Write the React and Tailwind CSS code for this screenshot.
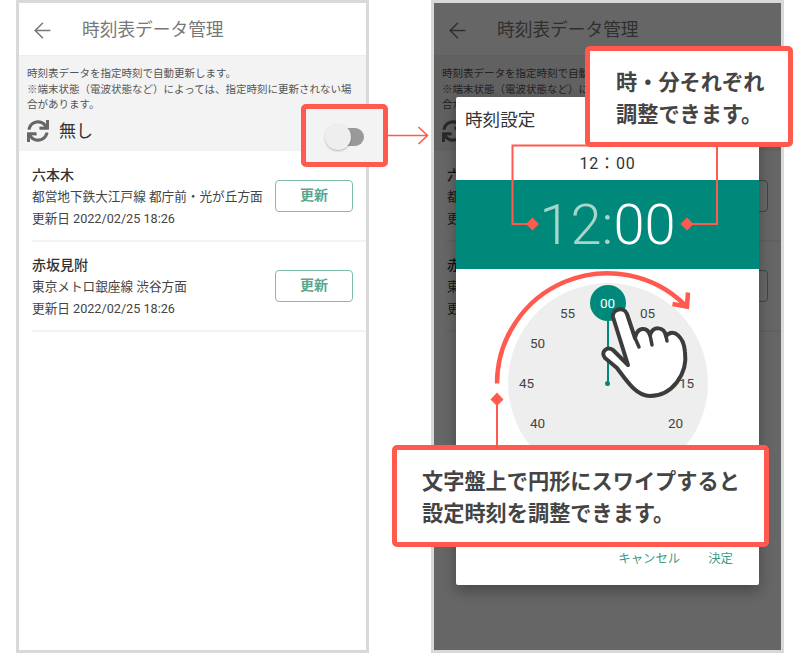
import React from 'react';
import { ArrowLeft } from 'lucide-react';
import { FaSync } from 'react-icons/fa';

const stations = [
  { name: '六本木', line: '都営地下鉄大江戸線 都庁前・光が丘方面' },
  { name: '赤坂見附', line: '東京メトロ銀座線 渋谷方面' },
];

const dialNumbers = [
  { label: '55', x: 60, y: 30 },
  { label: '05', x: 140, y: 30 },
  { label: '50', x: 30, y: 60 },
  { label: '10', x: 170, y: 60 },
  { label: '45', x: 19, y: 100 },
  { label: '15', x: 179, y: 100 },
  { label: '40', x: 30, y: 140 },
  { label: '20', x: 168, y: 140 },
];

function TimetableScreen() {
  return (
    <>
      {/* Header */}
      <div className="flex h-[53px] items-center border-b border-[#eeeeee] pl-[10.5px] pt-[3px]">
        <ArrowLeft size={25} strokeWidth={1.5} className="text-[#777777]" />
        <span className="ml-[27.5px] text-[17.7px] text-[#777777]">時刻表データ管理</span>
      </div>

      {/* Auto update */}
      <div className="h-[95px] bg-[#f3f3f3] pl-2 pr-3 pt-[10px]">
        <p className="text-[10.5px] leading-[15.5px] text-[#555555]">
          時刻表データを指定時刻で自動更新します。
          <br />
          ※端末状態（電波状態など）によっては、指定時刻に更新されない場合があります。
        </p>
        <div className="mt-[6px] flex items-center gap-[10px]">
          <FaSync size={22} className="text-[#666666]" />
          <span className="text-[17px] text-[#333333]">無し</span>
        </div>
      </div>

      {/* Stations */}
      <div className="pt-[1px]">
        {stations.map((s) => (
          <div key={s.name} className="ml-[13px] flex h-[90px] items-center justify-between border-b-2 border-[#f3f3f3] pr-[13px]">
            <div className="flex flex-col gap-[4px] pt-[2px]">
              <span className="text-[14px] leading-[18px] font-medium text-[#333333]">{s.name}</span>
              <span className="text-[12.65px] leading-[18px] text-[#444444]">{s.line}</span>
              <span className="text-[12.65px] leading-[18px] text-[#444444]">更新日 2022/02/25 18:26</span>
            </div>
            <button className="mb-[1px] h-[32px] w-[78px] rounded-[4px] border-[1.5px] border-[#7fbfa8] text-[14px] font-bold text-[#5aa68e]">
              更新
            </button>
          </div>
        ))}
      </div>
    </>
  );
}

function TimeDialog() {
  return (
    <div className="absolute left-[22px] top-[94px] flex h-[488px] w-[303px] flex-col rounded-[2px] bg-white shadow-[0_6px_14px_rgba(0,0,0,0.3)]">
      <div className="pl-[9px] pt-[10px] text-[17.6px] leading-[26px] text-[#333333]">時刻設定</div>
      <div className="mt-[21px] text-center text-[16px] leading-[20px] tracking-[0.8px] text-[#333333]">12：00</div>
      <div className="mt-[6px] flex h-[89px] items-center justify-center bg-[#00897b] text-[56px] font-light leading-none">
        <span className="text-[#a8d5ca]">12:</span>
        <span className="text-white">00</span>
      </div>

      {/* Dial */}
      <div className="relative mx-auto mt-[14px] size-[200px] rounded-full bg-[#eeeeee]">
        <div className="absolute left-[99px] top-[38px] h-[62px] w-[2px] bg-[#00897b]" />
        <div className="absolute left-[97.5px] top-[97.5px] size-[5px] rounded-full bg-[#00897b]" />
        <div className="absolute left-[82px] top-[2px] flex size-[36px] items-center justify-center rounded-full bg-[#00897b] text-[13.5px] text-white">
          00
        </div>
        {dialNumbers.map((n) => (
          <span
            key={n.label}
            className="absolute -translate-x-1/2 -translate-y-1/2 text-[13.5px] text-[#444444]"
            style={{ left: n.x, top: n.y }}
          >
            {n.label}
          </span>
        ))}
      </div>

      <div className="mt-auto flex justify-end gap-[28px] pb-[17px] pr-[26px] text-[12.4px] leading-[18px] text-[#3a9a84]">
        <span>キャンセル</span>
        <span>決定</span>
      </div>
    </div>
  );
}

function Annotations() {
  return (
    <svg className="pointer-events-none absolute inset-0" width="800" height="653" viewBox="0 0 800 653" fill="none">
      {/* toggle arrow */}
      <path d="M388 135.5H427M418.5 127L427.5 135.5L418.5 144" stroke="#ff5a4d" strokeWidth="1.6" />
      {/* hour / minute leaders */}
      <path d="M590 145.5H512.5V224H532" stroke="#ff5a4d" strokeWidth="2" />
      <path d="M717 145V224H687" stroke="#ff5a4d" strokeWidth="2" />
      <path d="M532.5 217.5L539 224L532.5 230.5L526 224Z" fill="#ff5a4d" />
      <path d="M687 217.5L693.5 224L687 230.5L680.5 224Z" fill="#ff5a4d" />
      {/* swipe arc */}
      <path d="M497 383.5A110.5 110.5 0 0 1 685 305" stroke="#ff5a4d" strokeWidth="4.5" />
      <path d="M688 292.5L687 306.5L672.5 304" stroke="#ff5a4d" strokeWidth="4.5" />
      <path d="M497 392.5L503.5 399.5L497 406L490.5 399.5Z" fill="#ff5a4d" />
      <path d="M497 400V447" stroke="#ff5a4d" strokeWidth="2" />
      {/* hand */}
      <path
        d="M613 317C612 309 624 306 627 314L635 338C637 327 647 326 650 335C653 326 664 326 666 336C674 327 684 338 685 352C688 374 672 396 650 396C636 396 626 380 617 368L605 358C600 352 607 346 613 350L628 365Z"
        fill="white"
        stroke="#3c3c3c"
        strokeWidth="4"
        strokeLinejoin="round"
      />
      <path d="M635 338L639 347M650 335L652 345M666 336L667 341" stroke="#3c3c3c" strokeWidth="3.5" strokeLinecap="round" />
    </svg>
  );
}

export default function App() {
  return (
    <div className="relative flex h-[653px] w-[800px] gap-[62px] overflow-hidden bg-white pl-4 font-['Roboto','Noto_Sans_CJK_JP',sans-serif]">
      {/* Before */}
      <div className="relative h-[653px] w-[353px] overflow-hidden border-[3px] border-[#d9d9d9]">
        <TimetableScreen />
      </div>

      {/* After, dimmed with dialog */}
      <div className="relative h-[653px] w-[353px] overflow-hidden border-[3px] border-[#d9d9d9]">
        <TimetableScreen />
        <div className="absolute inset-0 bg-black/60" />
        <TimeDialog />
      </div>

      <Annotations />

      {/* Toggle callout */}
      <div className="absolute left-[301px] top-[104px] h-[63px] w-[87px] rounded-[5px] border-[5px] border-[#ff5a4d] bg-[#f3f3f3]">
        <div className="absolute left-[27px] top-[19px] h-[18px] w-[31px] rounded-full bg-[#999999]" />
        <div className="absolute left-[19px] top-[15px] size-[26px] rounded-full bg-[#eeeeee] shadow-[0_1px_2px_rgba(0,0,0,0.25)]" />
      </div>

      {/* Hour / minute note */}
      <div className="absolute left-[585px] top-[46px] flex h-[101px] w-[208px] flex-col justify-center rounded-[5px] border-[5px] border-[#ff5a4d] bg-white pl-[26px] pt-[4px] text-[21.2px] font-bold leading-[32px] text-[#444444]">
        <span>時・分それぞれ</span>
        <span>調整できます。</span>
      </div>

      {/* Swipe note */}
      <div className="absolute left-[392px] top-[445px] flex h-[102px] w-[377px] flex-col justify-center rounded-[5px] border-[5px] border-[#ff5a4d] bg-white pl-[25px] pt-[4px] text-[21.2px] font-bold leading-[32px] text-[#444444]">
        <span>文字盤上で円形にスワイプすると</span>
        <span>設定時刻を調整できます。</span>
      </div>
    </div>
  );
}
